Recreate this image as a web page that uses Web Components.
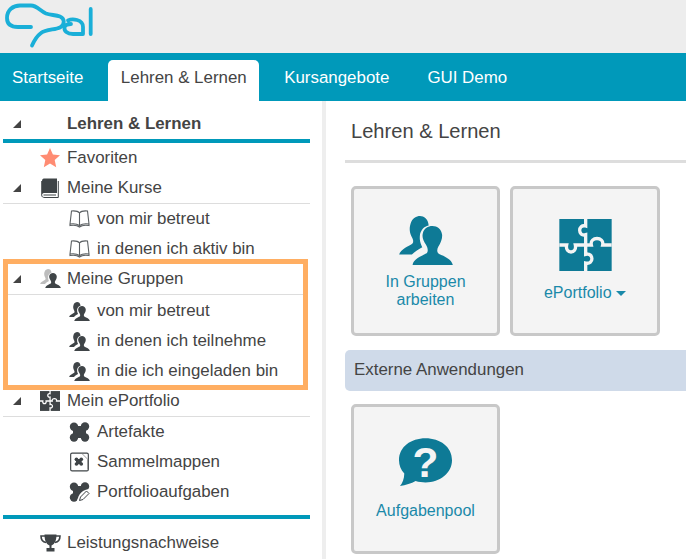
<!DOCTYPE html>
<html lang="de"><head><meta charset="utf-8"><title>Opal</title>
<style>html,body{margin:0;padding:0;background:#fff;overflow:hidden}body{font:16.9px/18px "Liberation Sans",Arial,sans-serif;color:#444;width:686px;height:559px}</style>
</head><body>
<op-app></op-app>
<script>
const S='width="100%" height="100%" style="display:block"';
const blob=c=>`<g fill="${c}"><rect x="4" y="4" width="13" height="12"/><circle cx="5" cy="4.700" r="4.200"/><circle cx="16" cy="4.500" r="4.200"/><circle cx="16" cy="15.500" r="4.200"/><circle cx="5" cy="15.500" r="4.200"/></g>`;
const P={
users:(a,b)=>`<svg viewBox="176 122 160 146" ${S}><path fill="${b}" d="M176 237C180 222 205 212 215 205C220 200 218 192 214 185C208 175 205 160 210 145C215 128 228 122 238 122C250 122 262 130 264 150C250 152 240 165 238 178C236 195 240 205 245 215C235 220 222 228 214 237Z"/><path fill="${a}" d="M216 268C218 250 245 240 258 233C263 228 262 218 256 208C248 195 243 185 247 172C250 160 262 152 275 152C290 152 302 162 304 178C305 190 300 203 293 213C288 222 288 230 295 235C310 242 332 250 336 268Z"/></svg>`,
puzzle:(a,g)=>`<svg viewBox="658 132 157 156" ${S}><rect x="658" y="132" width="157" height="156" fill="${a}"/><path fill="none" stroke="${g}" stroke-width="10" d="M737 132V153C713 146 713 186 737 179V211M658 210H680C674 238 712 238 706 210H737H754C748 184 794 184 788 210H815M737 211V238C762 232 762 270 737 264V288"/></svg>`,
star:(a)=>`<svg viewBox="0 0 20 20" ${S}><path fill="${a}" d="M10 0L12.900 6.500 20 7.300 14.700 12 16.200 19.200 10 15.500 3.800 19.200 5.300 12 0 7.300 7.100 6.500Z"/></svg>`,
book:()=>`<svg viewBox="0 0 18 20" ${S}><path fill="#3f4447" d="M1 3C1 1 2 .5 4 .5H16V15H4C2.500 15 1.500 15.500 1 16Z"/><path fill="none" stroke="#3f4447" d="M.7 3V17C.7 19 2 19.500 4 19.500H17.300V3"/><path fill="none" stroke="#3f4447" d="M2.500 17H15"/></svg>`,
open:()=>`<svg viewBox="0 0 21 18" ${S}><path fill="none" stroke="#5a5f62" stroke-width="1.100" d="M10.500 3C9 1 6 .7 2.500 1L1 14C4 13.500 8 13.800 10.500 15.500C13 13.800 17 13.500 20 14L18.500 1C15 .7 12 1 10.500 3V15.500M1 14V15.500C4 15 8 15 10.500 17C13 15 17 15 20 15.500V14"/></svg>`,
piece:()=>`<svg viewBox="0 0 21 20" ${S}>${blob('#3f4447')}</svg>`,
folder:()=>`<svg viewBox="0 0 20 20" ${S}><rect x=".7" y=".7" width="18.600" height="18.600" rx="1.500" fill="#fff" stroke="#3f4447" stroke-width="1.200"/><path stroke="#999" fill="none" d="M13 1.500L18.500 7V18"/><g transform="translate(4.500 5) scale(.46)">${blob('#3f4447')}</g></svg>`,
task:()=>`<svg viewBox="0 0 21 20" ${S}>${blob('#3f4447')}<path fill="#fff" d="M21 7C14 7 9 12 8 20H21Z"/><path fill="#fff" stroke="#3f4447" stroke-width="1" d="M10.500 18.500L11.500 15L17.500 9L20 11.500L14 17.500Z"/></svg>`,
trophy:()=>`<svg viewBox="0 0 21 18" ${S}><path fill="none" stroke="#3f4447" stroke-width="1.600" d="M5 2H1C1 6 3 8 6 8.500M16 2H20C20 6 18 8 15 8.500"/><path fill="#3f4447" d="M4.500 .5H16.500C16.500 6 15 10 11.500 11.500V14H14.500V17.500H6.500V14H9.500V11.500C6 10 4.500 6 4.500 .5Z"/></svg>`,
help:(a,g)=>`<svg viewBox="176 296 160 146" ${S}><path fill="${a}" d="M256 296C212 296 176 322 176 362C176 378 182 392 192 402C192 418 186 432 179 440C196 438 214 432 226 425C236 428 246 429 256 429C300 429 336 400 336 362C336 322 300 296 256 296Z"/><text x="256" y="414" text-anchor="middle" font-family="Liberation Sans" font-weight="700" font-size="128" fill="${g}">?</text></svg>`,
logo:()=>`<svg viewBox="0 0 110 60" ${S}><g fill="none" stroke="#1aafd8" stroke-width="3.800" stroke-linecap="round" stroke-linejoin="round"><path d="M31 27H18C11 27 7 24 7 18C7 10 13 5.500 20 5.500H31C37 5.500 40 11 46 13.500C50 15 56 15 60 16.500C65 18.500 65 25 60 27.500C55 30 46 29 41 33C37 36 34 41 32 45.500"/><path d="M68 20.500C72 18.500 83 19 83 27V34H73C67 34 64 31 64.500 27.500C65 25 67 24 71 24"/><path d="M90.700 9V34"/></g></svg>`
};
class Base extends HTMLElement{
  constructor(h){super();this.attachShadow({mode:'open'}).innerHTML=h}
}
customElements.define('op-icon',class extends HTMLElement{
  constructor(){super();this.attachShadow({mode:'open'})}
  connectedCallback(){
    const n=this.getAttribute('name'),a=this.getAttribute('a')||'#3f4447',b=this.getAttribute('b')||a,w=this.getAttribute('w'),h=this.getAttribute('h');
    this.shadowRoot.innerHTML=`<style>:host{display:block;width:${w}px;height:${h}px;flex:none}</style>`+P[n](a,b);
  }
});
customElements.define('op-header',class extends Base{constructor(){super(`<style>:host{display:block;height:53px;background:#ededed;overflow:hidden}</style><op-icon name="logo" w="110" h="60"></op-icon>`)}});
customElements.define('op-tab',class extends Base{constructor(){super(`<style>:host{display:block;height:41px;line-height:35px;padding:0 12px;color:#fff;font-size:16.900px}:host([active]){background:#fff;color:#444;border-radius:5px 5px 0 0;padding:0 12.500px}</style><slot></slot>`)}});
customElements.define('op-tabs',class extends Base{constructor(){super(`<style>:host{display:flex;height:41px;padding-top:7px;background:#0099ba;gap:13px}</style><slot></slot>`)}});
customElements.define('op-row',class extends Base{constructor(){super(`<style>
:host{display:flex;align-items:center;height:30px;box-sizing:border-box;white-space:nowrap;color:#444;padding-bottom:1px}
:host([line]){height:31px;border-bottom:1px solid #ddd;padding-bottom:1px}
.t{width:37px;flex:none;padding-left:10px;box-sizing:border-box}
.t i{display:block;width:0;height:0;border-left:8px solid transparent;border-bottom:8px solid #444}
.ic{width:20px;flex:none;display:flex;justify-content:center;margin-right:7px}
:host([sub]) .t{width:66px}
:host([sub]) .ic{width:21px}
:host([sub]) .t i,:host(:not([arrow])) .t i{display:none}
:host([strong]){font-weight:700;height:31px;padding-bottom:0}
:host([low]){padding-bottom:0;padding-top:2px}
</style><div class="t"><i></i></div><div class="ic"><slot name="icon"></slot></div><div class="x"><slot></slot></div>`)}});
customElements.define('op-group',class extends Base{constructor(){super(`<style>:host{display:block;outline:5px solid #ffae62;margin:0 7px 1px 5px}::slotted(*){margin-left:-5px}</style><slot></slot>`)}});
customElements.define('op-rule',class extends Base{constructor(){super(`<style>:host{display:block;height:4px;background:#0099ba}</style>`)}});
customElements.define('op-card',class extends Base{constructor(){super(`<style>:host{display:flex;flex-direction:column;align-items:center;width:149px;height:150px;box-sizing:border-box;border:3px solid #c8c8c8;border-radius:5px;background:#f4f4f4;color:#1a89a9;text-align:center;font-size:16px;line-height:18px}
.i{display:flex;align-items:flex-end;justify-content:center;height:var(--ih,76px);flex:none}.l{margin-top:var(--lm,8px)}</style><div class="i"><slot name="icon"></slot></div><div class="l"><slot></slot></div>`)}});
customElements.define('op-main',class extends Base{constructor(){super(`<style>:host{display:block;flex:1;min-width:0;padding:17px 0 0 19px;overflow:hidden}
h1{font:400 20.100px/26px "Liberation Sans",Arial,sans-serif;color:#444;margin:0 0 0 6px}
.u{height:3px;background:#ddd;margin:16px 0 0}
.cards{display:flex;gap:10px;margin:23px 0 0 6px}
.bar{height:41px;line-height:39px;background:#cfdae9;border-radius:5px 0 0 5px;padding-left:9px;margin:14px 0 13px;color:#444}
</style><h1>Lehren &amp; Lernen</h1><div class="u"></div>
<div class="cards"><op-card><op-icon slot="icon" name="users" a="#0e7a96" w="54" h="49"></op-icon>In Gruppen<br>arbeiten</op-card>
<op-card style="width:150px;--ih:82px;--lm:13px"><op-icon slot="icon" name="puzzle" a="#0e7a96" b="#f4f4f4" w="53" h="52"></op-icon>ePortfolio <span style="display:inline-block;vertical-align:2px;border:5px solid transparent;border-top-color:#1a89a9;border-bottom:0"></span></op-card></div>
<div class="bar">Externe Anwendungen</div>
<div class="cards" style="margin-top:0"><op-card style="--ih:80px;--lm:15px"><op-icon slot="icon" name="help" a="#0e7a96" b="#f4f4f4" w="53" h="49"></op-icon>Aufgabenpool</op-card></div>`)}});
customElements.define('op-app',class extends Base{constructor(){super(`<style>:host{display:block;width:686px;height:559px;overflow:hidden}
.b{display:flex;height:458px}
.s{width:307px;flex:none;padding:7px 12px 0 3px;border-right:4px solid #eee}
.sp{height:8px}
</style>
<op-header></op-header>
<op-tabs><op-tab>Startseite</op-tab><op-tab active>Lehren &amp; Lernen</op-tab><op-tab>Kursangebote</op-tab><op-tab style="margin-left:1px">GUI Demo</op-tab></op-tabs>
<div class="b"><div class="s">
<op-row arrow strong>Lehren &amp; Lernen</op-row>
<op-rule></op-rule>
<op-row><op-icon slot="icon" name="star" a="#ff8c73" w="20" h="20"></op-icon>Favoriten</op-row>
<op-row arrow line><op-icon slot="icon" name="book" w="18" h="20"></op-icon>Meine Kurse</op-row>
<op-row sub><op-icon slot="icon" name="open" w="21" h="18"></op-icon>von mir betreut</op-row>
<op-row sub><op-icon slot="icon" name="open" w="21" h="18"></op-icon>in denen ich aktiv bin</op-row>
<op-group>
<op-row arrow line><op-icon slot="icon" name="users" b="#bdbdbd" w="21" h="19"></op-icon>Meine Gruppen</op-row>
<op-row sub low><op-icon slot="icon" name="users" w="21" h="19"></op-icon>von mir betreut</op-row>
<op-row sub low><op-icon slot="icon" name="users" w="21" h="19"></op-icon>in denen ich teilnehme</op-row>
<op-row sub low><op-icon slot="icon" name="users" w="21" h="19"></op-icon>in die ich eingeladen bin</op-row>
</op-group>
<op-row arrow line><op-icon slot="icon" name="puzzle" b="#fff" w="20" h="20"></op-icon>Mein ePortfolio</op-row>
<op-row sub><op-icon slot="icon" name="piece" w="21" h="20"></op-icon>Artefakte</op-row>
<op-row sub><op-icon slot="icon" name="folder" w="19" h="20"></op-icon>Sammelmappen</op-row>
<op-row sub><op-icon slot="icon" name="task" w="21" h="20"></op-icon>Portfolioaufgaben</op-row>
<div class="sp"></div>
<op-rule></op-rule>
<div class="sp"></div>
<op-row low><op-icon slot="icon" name="trophy" w="21" h="18"></op-icon>Leistungsnachweise</op-row>
</div><op-main></op-main></div>`)}});
</script>
</body></html>
